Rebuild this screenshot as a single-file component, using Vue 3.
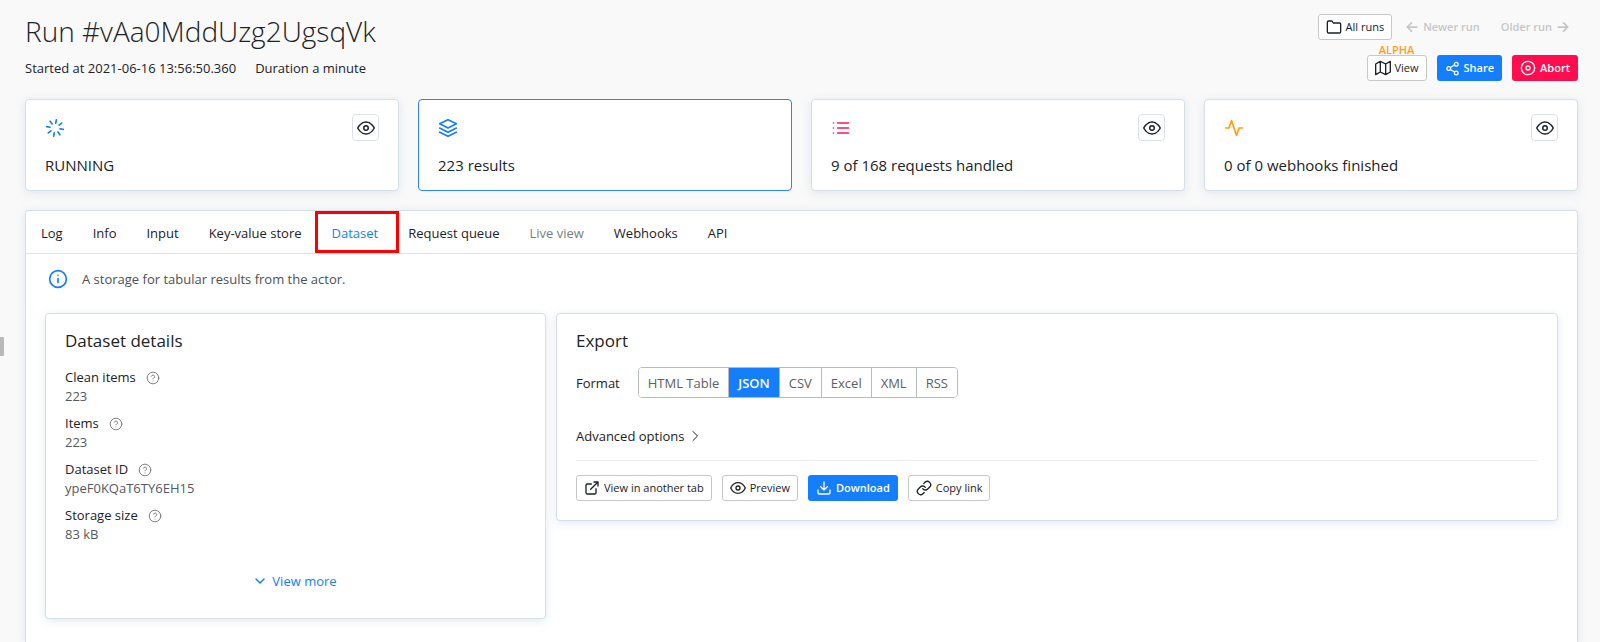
<script setup>
import { h, ref } from 'vue'

const glyphs = {
  loader: '<g transform="rotate(9 12 12)"><path d="M12 2v4M12 18v4M4.93 4.93l2.83 2.83M16.24 16.24l2.83 2.83M2 12h4M18 12h4M4.93 19.07l2.83-2.83M16.24 7.76l2.83-2.83"/></g>',
  layers: '<path d="M12 2 2 7l10 5 10-5-10-5zM2 17l10 5 10-5M2 12l10 5 10-5"/>',
  list: '<path d="M8 6h13M8 12h13M8 18h13M3 6h.01M3 12h.01M3 18h.01"/>',
  activity: '<path d="M22 12h-4l-3 9L9 3l-3 9H2"/>',
  eye: '<path d="M1 12s4-8 11-8 11 8 11 8-4 8-11 8-11-8-11-8z"/><circle cx="12" cy="12" r="3"/>',
  folder: '<path d="M22 19a2 2 0 0 1-2 2H4a2 2 0 0 1-2-2V5a2 2 0 0 1 2-2h5l2 3h9a2 2 0 0 1 2 2z"/>',
  left: '<path d="M20 12H4M11 5l-7 7 7 7"/>',
  right: '<path d="M4 12h16M13 5l7 7-7 7"/>',
  map: '<path d="M1 6v16l7-4 8 4 7-4V2l-7 4-8-4-7 4zM8 2v16M16 6v16"/>',
  share: '<circle cx="18" cy="5" r="3"/><circle cx="6" cy="12" r="3"/><circle cx="18" cy="19" r="3"/><path d="M8.59 13.51l6.83 3.98M15.41 6.51l-6.82 3.98"/>',
  disc: '<circle cx="12" cy="12" r="10"/><circle cx="12" cy="12" r="3"/>',
  info: '<circle cx="12" cy="12" r="10"/><path d="M12 16.5v-5M12 7.5h.01"/>',
  help: '<circle cx="12" cy="12" r="10"/><path d="M9.09 9a3 3 0 0 1 5.83 1c0 2-3 3-3 3M12 17h.01"/>',
  external: '<path d="M18 13v6a2 2 0 0 1-2 2H5a2 2 0 0 1-2-2V8a2 2 0 0 1 2-2h6M15 3h6v6M10 14 21 3"/>',
  download: '<path d="M21 15v4a2 2 0 0 1-2 2H5a2 2 0 0 1-2-2v-4M7 10l5 5 5-5M12 15V3"/>',
  link: '<path d="M10 13a5 5 0 0 0 7.54.54l3-3a5 5 0 0 0-7.07-7.07l-1.72 1.71M14 11a5 5 0 0 0-7.54-.54l-3 3a5 5 0 0 0 7.07 7.07l1.71-1.71"/>',
  down: '<path d="M4 8l8 8 8-8"/>',
  next: '<path d="M8 3l9 9-9 9"/>',
}

const Icon = (props) =>
  h('svg', {
    viewBox: '0 0 24 24',
    width: props.size,
    height: props.size,
    fill: 'none',
    stroke: 'currentColor',
    'stroke-width': props.stroke ?? 2,
    'stroke-linecap': 'round',
    'stroke-linejoin': 'round',
    'aria-hidden': 'true',
    innerHTML: glyphs[props.name],
  })
Icon.props = ['name', 'size', 'stroke']

const stats = [
  { icon: 'loader', tone: 'blue', label: 'RUNNING', eye: true },
  { icon: 'layers', tone: 'blue', label: '223 results', eye: false, active: true },
  { icon: 'list', tone: 'red', label: '9 of 168 requests handled', eye: true },
  { icon: 'activity', tone: 'orange', label: '0 of 0 webhooks finished', eye: true },
]
const tabs = ['Log', 'Info', 'Input', 'Key-value store', 'Dataset', 'Request queue', 'Live view', 'Webhooks', 'API']
const tab = ref('Dataset')
const details = [
  ['Clean items', '223'],
  ['Items', '223'],
  ['Dataset ID', 'ypeF0KQaT6TY6EH15'],
  ['Storage size', '83 kB'],
]
const formats = ['HTML Table', 'JSON', 'CSV', 'Excel', 'XML', 'RSS']
const format = ref('JSON')
</script>

<template>
  <div class="page">
    <span class="handle"></span>
    <header class="head">
      <div>
        <h1>Run #vAa0MddUzg2UgsqVk</h1>
        <p class="meta"><span>Started at 2021-06-16 13:56:50.360</span><span>Duration a minute</span></p>
      </div>
      <div class="actions">
        <div class="row nav">
          <button class="btn"><Icon name="folder" size="16" />All runs</button>
          <button class="btn ghost" disabled><Icon name="left" size="14" stroke="3" />Newer run</button>
          <button class="btn ghost" disabled>Older run<Icon name="right" size="14" stroke="3" /></button>
        </div>
        <div class="row">
          <button class="btn"><span class="alpha">ALPHA</span><Icon name="map" size="16" />View</button>
          <button class="btn solid blue-bg"><Icon name="share" size="15" />Share</button>
          <button class="btn solid red-bg"><Icon name="disc" size="16" />Abort</button>
        </div>
      </div>
    </header>

    <section class="stats">
      <article v-for="s in stats" :key="s.label" class="card stat" :class="{ active: s.active }">
        <div class="stat-top">
          <Icon :class="s.tone" :name="s.icon" size="20" />
          <button v-if="s.eye" class="eye" aria-label="Show"><Icon name="eye" size="18" /></button>
        </div>
        <p>{{ s.label }}</p>
      </article>
    </section>

    <main class="card panel">
      <nav class="tabs">
        <button
          v-for="t in tabs"
          :key="t"
          class="tab"
          :class="{ current: t === tab, muted: t === 'Live view' }"
          @click="tab = t"
        >{{ t }}</button>
      </nav>
      <p class="note"><Icon class="blue" name="info" size="20" />A storage for tabular results from the actor.</p>
      <div class="boxes">
        <section class="card box">
          <h2>Dataset details</h2>
          <dl>
            <div v-for="[k, v] in details" :key="k">
              <dt>{{ k }}<Icon name="help" size="14" stroke="1.6" /></dt>
              <dd>{{ v }}</dd>
            </div>
          </dl>
          <button class="more"><Icon name="down" size="12" stroke="3" />View more</button>
        </section>
        <section class="card box">
          <h2>Export</h2>
          <div class="format">
            <span id="format-label">Format</span>
            <div class="seg" role="group" aria-labelledby="format-label">
              <button v-for="f in formats" :key="f" :class="{ on: f === format }" @click="format = f">{{ f }}</button>
            </div>
          </div>
          <button class="advanced">Advanced options<Icon name="next" size="12" /></button>
          <div class="row foot">
            <button class="btn"><Icon name="external" size="16" />View in another tab</button>
            <button class="btn"><Icon name="eye" size="16" />Preview</button>
            <button class="btn solid blue-bg"><Icon name="download" size="16" />Download</button>
            <button class="btn"><Icon name="link" size="16" />Copy link</button>
          </div>
        </section>
      </div>
    </main>
  </div>
</template>

<style>
body {
  background: #f9f9f9;
}
</style>

<style scoped>
.page {
  box-sizing: border-box;
  min-height: 100vh;
  display: flex;
  flex-direction: column;
  padding: 14px 22px 0 25px;
  position: relative;
  font: 13px/20px "Open Sans", "Noto Sans", sans-serif;
  color: #1d2226;
}
h1, h2, p, dl, dd { margin: 0; }
button { font: inherit; color: inherit; cursor: pointer; }
svg { flex: none; display: block; }
.handle {
  position: absolute;
  left: 0;
  top: 337px;
  width: 4px;
  height: 19px;
  background: #b9b9b9;
  border-radius: 0 1px 1px 0;
}
.head {
  display: flex;
  justify-content: space-between;
  align-items: flex-start;
}
h1 {
  font-size: 28px;
  line-height: 34px;
  font-weight: 300;
}
.meta {
  display: flex;
  gap: 19px;
  margin-top: 10px;
}
.actions {
  display: flex;
  flex-direction: column;
  align-items: flex-end;
  gap: 15px;
}
.row { display: flex; gap: 10px; }
.nav { gap: 5px; }
.btn {
  box-sizing: border-box;
  height: 26px;
  display: flex;
  align-items: center;
  gap: 4px;
  padding: 0 7px;
  border: 1px solid #c8c8c8;
  border-radius: 3px;
  background: #fff;
  font-size: 11px;
  font-weight: 500;
  position: relative;
  white-space: nowrap;
}
.ghost {
  background: none;
  border-color: transparent;
  color: #c6c6c6;
  font-weight: 600;
  cursor: default;
}
.solid {
  color: #fff;
  border-color: transparent;
  font-weight: 600;
}
.blue-bg { background: #147eff; }
.red-bg { background: #ff0d4e; }
.alpha {
  position: absolute;
  left: 0;
  right: 0;
  top: -13px;
  text-align: center;
  font-size: 11px;
  line-height: 14px;
  font-weight: 600;
  color: #ff9f14;
}
.card {
  background: #fff;
  border: 1px solid #d5dfe8;
  border-radius: 4px;
  box-shadow: 0 2px 8px #c9d4e480;
}
.stats {
  display: grid;
  grid-template-columns: repeat(4, 1fr);
  gap: 19px;
  margin-top: 18px;
}
.stat { padding: 14px 19px; }
.stat.active { border-color: #2b83ff; box-shadow: none; }
.stat-top {
  display: flex;
  justify-content: space-between;
  align-items: center;
  height: 27px;
}
.stat p {
  margin-top: 13px;
  font-size: 15px;
  line-height: 22px;
}
.eye {
  box-sizing: border-box;
  width: 27px;
  height: 27px;
  display: grid;
  place-items: center;
  padding: 0;
  border: 1px solid #dbe3ea;
  border-radius: 4px;
  background: #fff;
}
.blue { color: #147eff; }
.red { color: #ff1657; }
.orange { color: #ff9f14; }
.panel {
  flex: 1;
  margin-top: 19px;
  border-bottom: 0;
  border-radius: 4px 4px 0 0;
}
.tabs {
  display: flex;
  height: 42px;
  border-bottom: 1px solid #dfe3e7;
}
.tab {
  padding: 2px 15px 0;
  border: 0;
  background: none;
  position: relative;
}
.muted { color: #7a7d80; }
.current { color: #147eff; }
.current::after {
  content: "";
  position: absolute;
  inset: 0 -6px 0 -2px;
  border: 3px solid #f00;
}
.note {
  display: flex;
  align-items: center;
  gap: 14px;
  padding: 15px 22px 0;
  color: #4c5156;
}
.boxes {
  display: grid;
  grid-template-columns: 1fr 2fr;
  align-items: start;
  gap: 10px;
  padding: 24px 19px;
}
.box { padding: 15px 19px 19px; }
h2 {
  font-size: 17px;
  line-height: 24px;
  font-weight: 400;
}
dl {
  display: grid;
  gap: 8px;
  margin-top: 15px;
}
dt, dd { line-height: 19px; }
dt { display: flex; align-items: center; gap: 10px; }
dt svg { color: #777; }
dd { color: #555a5e; }
.more {
  display: flex;
  align-items: center;
  gap: 6px;
  margin: 27px auto 8px;
  padding: 0;
  border: 0;
  background: none;
  color: #147eff;
  font-weight: 500;
}
.format {
  display: flex;
  align-items: center;
  gap: 18px;
  margin-top: 14px;
}
.seg {
  display: flex;
  border: 1px solid #b9bcbf;
  border-radius: 4px;
  overflow: hidden;
}
.seg button {
  height: 29px;
  padding: 0 9px;
  border: 0;
  background: #fff;
  color: #5c6165;
}
.seg button + button { border-left: 1px solid #b9bcbf; }
.seg .on { background: #147eff; color: #fff; font-weight: 600; }
.advanced {
  display: flex;
  align-items: center;
  gap: 5px;
  margin-top: 28px;
  padding: 0;
  border: 0;
  background: none;
}
.foot {
  margin-top: 14px;
  padding-top: 14px;
  border-top: 1px solid #ececec;
}
</style>
